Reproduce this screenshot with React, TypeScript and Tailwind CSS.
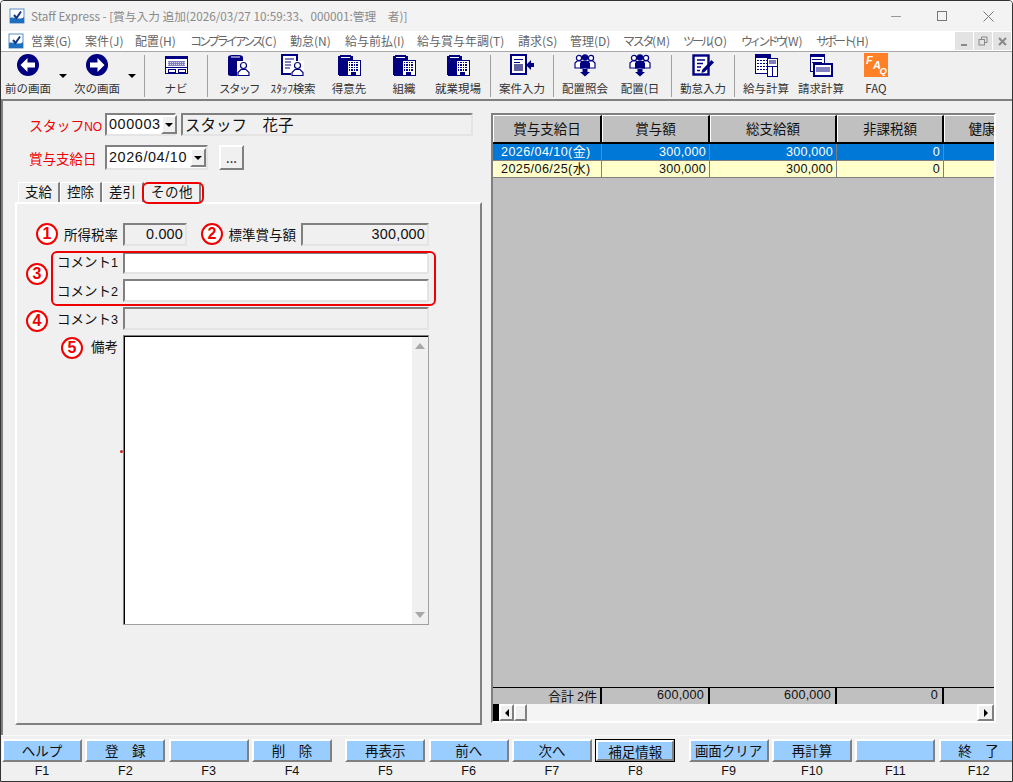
import { ReactNode } from "react";

const navy = "#000080";

function ArrowIcon({ dir }: { dir: "left" | "right" }) {
  return (
    <svg width="22" height="22" viewBox="0 0 22 22">
      <circle cx="11" cy="11" r="11" fill={navy} />
      {dir === "left" ? (
        <path d="M3.5 11 L10.5 4 V8.5 H18 V13.5 H10.5 V18 Z" fill="#fff" />
      ) : (
        <path d="M18.5 11 L11.5 4 V8.5 H4 V13.5 H11.5 V18 Z" fill="#fff" />
      )}
    </svg>
  );
}

function Cylinder() {
  return (
    <>
      <path d="M1 4 C1 1 3 1 8.5 1 C14 1 16 1 16 4 V20 C16 22 14 22 8.5 22 C3 22 1 22 1 20 Z" fill={navy} />
      <path d="M4 3 H13" stroke="#fff" strokeWidth="1" />
    </>
  );
}

function Person({ x = 0 }: { x?: number }) {
  return (
    <g transform={`translate(${x} 0)`}>
      <rect x="10" y="7" width="13" height="15" fill="#fff" />
      <circle cx="16.5" cy="11.5" r="3" fill="#fff" stroke={navy} strokeWidth="1.2" />
      <path d="M11 21.5 V18.5 L14 15.5 H19 L22 18.5 V21.5 Z" fill="#fff" stroke={navy} strokeWidth="1.2" />
    </g>
  );
}

function StaffIcon() {
  return (
    <svg width="24" height="23" viewBox="0 0 24 23">
      <Cylinder />
      <Person />
    </svg>
  );
}

function BuildingIcon() {
  return (
    <svg width="24" height="23" viewBox="0 0 24 23" shapeRendering="crispEdges">
      <Cylinder />
      <rect x="10" y="6" width="13" height="15" fill="#fff" stroke={navy} strokeWidth="1" />
      <path d="M12 8.5 H21 M12 11 H21 M12 13.5 H21 M12 16 H21" stroke={navy} strokeWidth="1.4" strokeDasharray="1.4 1" />
      <rect x="14" y="18" width="5" height="3" fill={navy} />
    </svg>
  );
}

function SearchDocIcon() {
  return (
    <svg width="24" height="23" viewBox="0 0 24 23">
      <rect x="1" y="1" width="15" height="19" fill="#fff" stroke={navy} strokeWidth="2" />
      <path d="M4 5 H13 M4 8 H13 M4 11 H13 M4 14 H9" stroke={navy} strokeWidth="1.2" />
      <Person x={0} />
    </svg>
  );
}

function NaviIcon() {
  return (
    <svg width="23" height="18" viewBox="0 0 23 18" shapeRendering="crispEdges">
      <rect x="0.5" y="0.5" width="22" height="17" fill="#fff" stroke={navy} />
      <rect x="1" y="1" width="21" height="2" fill={navy} />
      <rect x="3" y="4.5" width="17" height="5" fill="#8080c0" />
      <path d="M3 6 H20 M3 8 H20" stroke="#fff" strokeWidth="0.7" strokeDasharray="1 1" />
      <rect x="1" y="11" width="21" height="1" fill={navy} />
      <rect x="3" y="13" width="7" height="3" fill="#fff" stroke={navy} strokeWidth="1" />
      <rect x="13" y="13" width="7" height="3" fill="#fff" stroke={navy} strokeWidth="1" />
    </svg>
  );
}

function InputDocIcon() {
  return (
    <svg width="24" height="22" viewBox="0 0 24 22" shapeRendering="crispEdges">
      <rect x="1" y="1" width="15" height="19" fill="#fff" stroke={navy} strokeWidth="2" />
      <path d="M4 5 H13 M4 8 H10" stroke={navy} strokeWidth="1" />
      <rect x="4" y="10" width="9" height="7" fill="#6060a0" />
      <path d="M16 11 L21 6 V9 H24 V13 H21 V16 Z" fill={navy} shapeRendering="auto" />
    </svg>
  );
}

function PeopleIcon() {
  return (
    <svg width="22" height="23" viewBox="0 0 22 23">
      <circle cx="5" cy="4" r="2.6" fill="#fff" stroke={navy} strokeWidth="1.2" />
      <circle cx="17" cy="4" r="2.6" fill="#fff" stroke={navy} strokeWidth="1.2" />
      <path d="M1 14 V9 L3 7 H7 L9 9 V14 Z M13 14 V9 L15 7 H19 L21 9 V14 Z" fill="#fff" stroke={navy} strokeWidth="1.2" />
      <circle cx="11" cy="3.5" r="3.2" fill={navy} />
      <path d="M6 14.5 V9 L8 7 H14 L16 9 V14.5 Z" fill={navy} />
      <path d="M8.5 15 H13.5 V18 H16 L11 22.5 L6 18 H8.5 Z" fill={navy} />
    </svg>
  );
}

function PenDocIcon() {
  return (
    <svg width="23" height="22" viewBox="0 0 23 22">
      <rect x="1.5" y="1.5" width="15" height="19" fill="#fff" stroke={navy} strokeWidth="2.4" />
      <path d="M5 6 H13 M5 9.5 H11 M5 13 H9 M5 16.5 H8" stroke={navy} strokeWidth="1.6" />
      <path d="M10 16 L19.5 6 L22 8.5 L12.5 18 L9.5 19 Z" fill={navy} />
    </svg>
  );
}

function CalcIcon() {
  return (
    <svg width="23" height="23" viewBox="0 0 23 23" shapeRendering="crispEdges">
      <rect x="0.5" y="0.5" width="15" height="19" fill="#fff" stroke={navy} />
      <rect x="1" y="1" width="14" height="3" fill={navy} />
      <path d="M2 6.5 H14 M2 9.5 H14 M2 12.5 H14 M2 15.5 H14" stroke={navy} strokeWidth="1.6" strokeDasharray="2 1" />
      <rect x="12.5" y="4.5" width="10" height="18" fill="#fff" stroke={navy} />
      <rect x="14" y="6" width="7" height="4" fill="#8080c0" />
      <rect x="13" y="12" width="9" height="1" fill={navy} />
      <rect x="17" y="13" width="1" height="9" fill={navy} />
    </svg>
  );
}

function BillIcon() {
  return (
    <svg width="23" height="23" viewBox="0 0 23 23" shapeRendering="crispEdges">
      <rect x="0.5" y="0.5" width="14" height="17" fill="#fff" stroke={navy} />
      <rect x="1" y="1" width="13" height="2" fill={navy} />
      <path d="M2 5.5 H12 M2 8 H12" stroke={navy} />
      <rect x="3" y="9" width="20" height="14" fill={navy} />
      <rect x="5" y="11" width="16" height="10" fill="#fff" />
      <rect x="6" y="13" width="14" height="5" fill="#8080c0" />
    </svg>
  );
}

function FaqIcon() {
  return (
    <svg width="24" height="24" viewBox="0 0 24 24">
      <rect width="24" height="24" fill="#ff8026" />
      <g fill="#fff" fontFamily="Liberation Sans, sans-serif" fontWeight="700" fontStyle="italic">
        <text x="2" y="11" fontSize="11">F</text>
        <text x="9" y="16" fontSize="11">A</text>
        <text x="15.5" y="21" fontSize="9.5">Q</text>
      </g>
    </svg>
  );
}

function AppLogo() {
  return (
    <svg width="16" height="16" viewBox="0 0 16 16">
      <rect x="1" y="1" width="14" height="14" fill="#fff" stroke="#5a8fc0" />
      <path d="M1 10 C5 8 10 13 15 9 V15 H1 Z" fill="#1f6fc0" />
      <path d="M5 7 L7.5 10 L12 3.5" stroke="#123a80" strokeWidth="2" fill="none" />
    </svg>
  );
}

function DropArrow() {
  return <div className="w-0 h-0 border-x-[4px] border-x-transparent border-t-[4px] border-t-black" />;
}

function ToolItem({ label, icon, className }: { label: ReactNode; icon: ReactNode; className: string }) {
  return (
    <div className={`flex flex-col items-center shrink-0 ${className}`}>
      <div className="h-[26px] flex items-center justify-center">{icon}</div>
      <div className="mt-[2px] text-[11.5px] leading-[16px] text-[#333] whitespace-nowrap">{label}</div>
    </div>
  );
}

function ToolSep() {
  return <div className="w-px h-[42px] mt-[3px] bg-[#a0a0a0] shrink-0" />;
}

// kana in the menu is condensed in the app, so only that part gets tighter tracking
const menus = [
  { label: "営業", key: "(G)", w: "w-[54px]", kana: "" },
  { label: "案件", key: "(J)", w: "w-[50px]", kana: "" },
  { label: "配置", key: "(H)", w: "w-[55px]", kana: "" },
  { label: "コンプライアンス", key: "(C)", w: "w-[100px]", kana: "tracking-[-3px]" },
  { label: "勤怠", key: "(N)", w: "w-[55px]", kana: "" },
  { label: "給与前払", key: "(I)", w: "w-[72px]", kana: "" },
  { label: "給与賞与年調", key: "(T)", w: "w-[101px]", kana: "" },
  { label: "請求", key: "(S)", w: "w-[52px]", kana: "" },
  { label: "管理", key: "(D)", w: "w-[53px]", kana: "" },
  { label: "マスタ", key: "(M)", w: "w-[60px]", kana: "tracking-[-2.3px]" },
  { label: "ツール", key: "(O)", w: "w-[58px]", kana: "tracking-[-3px]" },
  { label: "ウィンドウ", key: "(W)", w: "w-[75px]", kana: "tracking-[-3.4px]" },
  { label: "サポート", key: "(H)", w: "w-[60px]", kana: "tracking-[-3px]" },
];

const fkeys = [
  { label: "ヘルプ", key: "F1" },
  { label: "登　録", key: "F2" },
  { label: "", key: "F3" },
  { label: "削　除", key: "F4" },
  { label: "再表示", key: "F5", gap: true },
  { label: "前へ", key: "F6" },
  { label: "次へ", key: "F7" },
  { label: "補足情報", key: "F8", focus: true },
  { label: "画面クリア", key: "F9", gap: true },
  { label: "再計算", key: "F10" },
  { label: "", key: "F11" },
  { label: "終　了", key: "F12" },
];

const num = "font-['Liberation_Sans','Noto_Sans_CJK_JP',sans-serif]";
const sunken = "border-2 border-t-[#808080] border-l-[#808080] border-r-[#e4e4e4] border-b-[#e4e4e4]";
const raised = "border-2 border-t-white border-l-white border-r-[#808080] border-b-[#808080]";
const colWidths = ["w-[109px]", "w-[108px]", "w-[127px]", "w-[107px]", "w-[75px]"];

function Combo({ value, className }: { value: string; className: string }) {
  return (
    <div className={`flex items-center bg-white ${sunken} ${className}`}>
      <span className={`flex-1 pl-[2px] text-[14.4px] tracking-[0.6px] text-[#111] whitespace-nowrap ${num}`}>{value}</span>
      <div className={`w-[16px] h-[19px] shrink-0 flex items-center justify-center bg-[#f0f0f0] ${raised}`}>
        <DropArrow />
      </div>
    </div>
  );
}

function Badge({ n, className }: { n: number; className: string }) {
  return (
    <div
      className={`absolute w-[22px] h-[22px] rounded-full bg-white border-[2.5px] border-[#f00000] text-[#f00000] flex items-center justify-center text-[16px] leading-none font-bold font-['Liberation_Sans',sans-serif] ${className}`}
    >
      {n}
    </div>
  );
}

function Label({ children, className = "w-[101px] leading-[23px]" }: { children: ReactNode; className?: string }) {
  return <div className={`text-right text-[13.5px] text-[#111] whitespace-nowrap shrink-0 ${className}`}>{children}</div>;
}

function GridRow({ first, values, className }: { first: ReactNode; values: string[]; className: string }) {
  return (
    <div className={`flex h-[17px] border-b border-[#808080] ${className}`}>
      <div className={`${colWidths[0]} shrink-0 border-r border-[#808080] pl-[8px] text-[12.6px] tracking-[0.4px] leading-[16px] whitespace-nowrap ${num}`}>{first}</div>
      {values.map((v, i) => (
        <div key={i} className={`${colWidths[i + 1]} shrink-0 border-r border-[#808080] pr-[3px] text-right text-[12.6px] tracking-[0.2px] leading-[16px] ${num}`}>
          {v}
        </div>
      ))}
    </div>
  );
}

export default function App() {
  return (
    <div className="relative w-[1013px] h-[782px] overflow-hidden flex flex-col bg-[#f0f0f0] border border-[#333] rounded-t-[4px] font-['Noto_Sans_CJK_JP',sans-serif]">
      {/* title bar */}
      <div className="h-[30px] flex items-center bg-[#f3f3f3] shrink-0">
        <div className="ml-[8px] mr-[6px]">
          <AppLogo />
        </div>
        <span className="text-[11.7px] text-[#8a8a8a] whitespace-nowrap">Staff Express - [賞与入力 追加(2026/03/27 10:59:33、000001:管理　者)]</span>
        <div className="ml-auto flex items-center">
          <div className="w-[46px] flex justify-center">
            <div className="w-[10px] h-px bg-[#999]" />
          </div>
          <div className="w-[46px] flex justify-center">
            <div className="w-[10px] h-[10px] border border-[#777]" />
          </div>
          <div className="w-[46px] flex justify-center mr-[1px]">
            <svg width="11" height="11" viewBox="0 0 11 11">
              <path d="M0.5 0.5 L10.5 10.5 M10.5 0.5 L0.5 10.5" stroke="#777" />
            </svg>
          </div>
        </div>
      </div>

      {/* menu bar */}
      <div className="h-[20px] flex items-center bg-white shrink-0">
        <div className="ml-[7px] mr-[7px]">
          <AppLogo />
        </div>
        {menus.map((m) => (
          <div key={m.label} className={`${m.w} text-[12px] leading-[20px] text-[#666] whitespace-nowrap shrink-0`}>
            <span className={m.kana}>{m.label}</span>
            {m.key}
          </div>
        ))}
        <div className="ml-auto flex gap-[1px] mr-[1px] text-[#777]">
          <div className="w-[18px] h-[18px] bg-[#e3e3e3] flex items-end justify-center pb-[4px]">
            <div className="w-[6px] h-[2px] bg-[#888]" />
          </div>
          <div className="w-[18px] h-[18px] bg-[#e3e3e3] flex items-center justify-center">
            <svg width="10" height="10" viewBox="0 0 10 10" fill="none" stroke="#888">
              <rect x="1" y="3.5" width="5.5" height="5.5" />
              <path d="M3.5 3 V1 H9 V6.5 H7" />
            </svg>
          </div>
          <div className="w-[18px] h-[18px] bg-[#e3e3e3] flex items-center justify-center">
            <svg width="9" height="9" viewBox="0 0 9 9">
              <path d="M1 1 L8 8 M8 1 L1 8" stroke="#888" strokeWidth="2" />
            </svg>
          </div>
        </div>
      </div>
      <div className="h-px bg-[#a8a8a8] shrink-0" />

      {/* toolbar */}
      <div className="h-[47px] flex shrink-0">
        <ToolItem className="w-[54px]" label="前の画面" icon={<ArrowIcon dir="left" />} />
        <div className="w-[15px] shrink-0 flex justify-center pt-[22px]">
          <DropArrow />
        </div>
        <ToolItem className="w-[54px]" label="次の画面" icon={<ArrowIcon dir="right" />} />
        <div className="w-[20px] shrink-0 flex justify-center pt-[22px] pr-[4px]">
          <DropArrow />
        </div>
        <ToolSep />
        <ToolItem className="w-[62px]" label="ナビ" icon={<NaviIcon />} />
        <ToolSep />
        <ToolItem className="w-[62px]" label={<span className="tracking-[-1.5px]">スタッフ</span>} icon={<StaffIcon />} />
        <ToolItem className="w-[46px]" label={<span className="text-[11.5px] tracking-[-0.2px]">ｽﾀｯﾌ検索</span>} icon={<SearchDocIcon />} />
        <ToolItem className="w-[66px]" label="得意先" icon={<BuildingIcon />} />
        <ToolItem className="w-[44px]" label="組織" icon={<BuildingIcon />} />
        <ToolItem className="w-[64px]" label="就業現場" icon={<BuildingIcon />} />
        <ToolSep />
        <ToolItem className="w-[62px]" label="案件入力" icon={<InputDocIcon />} />
        <ToolSep />
        <ToolItem className="w-[62px]" label="配置照会" icon={<PeopleIcon />} />
        <ToolItem className="w-[48px]" label="配置(日" icon={<PeopleIcon />} />
        <div className="w-[7px] shrink-0" />
        <ToolSep />
        <ToolItem className="w-[62px]" label="勤怠入力" icon={<PenDocIcon />} />
        <ToolSep />
        <ToolItem className="w-[62px]" label="給与計算" icon={<CalcIcon />} />
        <ToolItem className="w-[48px]" label="請求計算" icon={<BillIcon />} />
        <ToolItem className="w-[62px]" label="FAQ" icon={<FaqIcon />} />
      </div>

      {/* main area */}
      <div className="flex-1 flex min-h-0 border-t-2 border-l-2 border-[#808080] border-b-0">
        {/* left column */}
        <div className="relative w-[488px] shrink-0">
          <div className="flex mt-[12px] ml-[26px] h-[23px]">
            <div className="w-[76px] text-[14px] leading-[25px] text-[#f00000] whitespace-nowrap tracking-[-0.2px]">
              スタッフ<span className={`text-[12px] ${num}`}>NO</span>
            </div>
            <Combo value="000003" className="w-[71px] h-[23px]" />
            <div className={`ml-[5px] w-[292px] h-[23px] text-[15.5px] leading-[19px] pl-[2px] text-[#111] ${sunken}`}>スタッフ　花子</div>
          </div>
          <div className="flex mt-[9px] ml-[26px] h-[25px]">
            <div className="w-[76px] text-[13.5px] leading-[27px] text-[#f00000] whitespace-nowrap">賞与支給日</div>
            <Combo value="2026/04/10" className="w-[103px] h-[25px]" />
            <div className={`ml-[11px] w-[25px] h-[25px] bg-[#f0f0f0] text-center text-[13px] leading-[21px] text-black ${raised}`}>...</div>
          </div>

          {/* tabs */}
          <div className="flex mt-[12px] ml-[15px] h-[20px]">
            {["支給", "控除", "差引"].map((t) => (
              <div key={t} className="w-[42px] border-t border-l border-white border-r-2 border-r-[#808080] text-center text-[13.5px] leading-[17px] text-[#111]">
                {t}
              </div>
            ))}
            <div className="w-[57px] border-t border-l border-white border-r-2 border-r-[#808080] text-center text-[13.5px] leading-[17px] tracking-[0.5px] text-[#111]">
              その他
            </div>
          </div>

          {/* tab panel */}
          <div className="relative ml-[12px] w-[467px] h-[523px] border-2 border-t-white border-l-white border-r-[#808080] border-b-[#808080]">
            <div className="flex mt-[19px] h-[23px]">
              <Label>所得税率</Label>
              <div className={`ml-[5px] w-[64px] h-[23px] pr-[2px] text-right text-[14.4px] tracking-[0.2px] leading-[19px] text-[#111] ${num} ${sunken}`}>0.000</div>
              <Label className="ml-[40px] w-[69px] leading-[23px]">標準賞与額</Label>
              <div className={`ml-[5px] w-[128px] h-[23px] pr-[2px] text-right text-[14.4px] tracking-[0.2px] leading-[19px] text-[#111] ${num} ${sunken}`}>300,000</div>
            </div>
            <div className="flex mt-[6px] h-[22px]">
              <Label className="w-[101px] leading-[19px]">
                コメント<span className={`text-[12.6px] ${num}`}>1</span>
              </Label>
              <div className={`ml-[5px] w-[306px] h-[22px] bg-white ${sunken}`} />
            </div>
            <div className="flex mt-[5px] h-[23px]">
              <Label>
                コメント<span className={`text-[12.6px] ${num}`}>2</span>
              </Label>
              <div className={`ml-[5px] w-[306px] h-[23px] bg-white ${sunken}`} />
            </div>
            <div className="flex mt-[5px] h-[23px]">
              <Label>
                コメント<span className={`text-[12.6px] ${num}`}>3</span>
              </Label>
              <div className={`ml-[5px] w-[306px] h-[23px] ${sunken}`} />
            </div>
            <div className="flex mt-[5px] h-[290px]">
              <Label>備考</Label>
              <div className="ml-[5px] w-[306px] h-[290px] border border-t-[#808080] border-l-[#808080] border-r-[#a0a0a0] border-b-[#a0a0a0]">
                <div className="h-full bg-white flex justify-end border-t border-l border-black">
                  <div className="w-[16px] bg-[#f0f0f0] flex flex-col items-center justify-between py-[6px]">
                    <div className="w-0 h-0 border-x-[5px] border-x-transparent border-b-[6px] border-b-[#a8a8a8]" />
                    <div className="w-0 h-0 border-x-[5px] border-x-transparent border-t-[6px] border-t-[#a8a8a8]" />
                  </div>
                </div>
              </div>
            </div>

            {/* annotations */}
            <Badge n={1} className="left-[19px] top-[19px]" />
            <Badge n={2} className="left-[184px] top-[19px]" />
            <Badge n={3} className="left-[9px] top-[59px]" />
            <Badge n={4} className="left-[9px] top-[106px]" />
            <Badge n={5} className="left-[44px] top-[133px]" />
            <div className="absolute left-[34px] top-[47px] w-[385px] h-[55px] border-[2.5px] border-[#f00000] rounded-[6px]" />
            <div className="absolute left-[103px] top-[246px] w-[3px] h-[3px] rounded-full bg-[#d02020]" />
          </div>

          <div className="absolute left-[139px] top-[81px] w-[62px] h-[22px] border-[2.5px] border-[#f00000] rounded-[6px]" />
        </div>

        {/* right grid */}
        <div className="mt-[12px] w-[505px] h-[610px] flex flex-col border-2 border-t-[#808080] border-l-[#808080] border-r-white border-b-white bg-[#c0c0c0] overflow-hidden">
          <div className="flex h-[29px] border-b-2 border-black shrink-0">
            {["賞与支給日", "賞与額", "総支給額", "非課税額", "健康"].map((h, i) => (
              <div
                key={h}
                className={`${colWidths[i]} shrink-0 ${i < 4 ? "border-r-2 border-r-black" : ""} border-t border-l border-white text-center text-[13.5px] leading-[25px] text-[#111] whitespace-nowrap`}
              >
                {h}
              </div>
            ))}
          </div>
          <GridRow
            className="bg-[#0078d7] text-white"
            first={
              <>
                2026/04/10(<span className="text-[13px]">金</span>)
              </>
            }
            values={["300,000", "300,000", "0"]}
          />
          <GridRow
            className="bg-[#ffffcc] text-[#111]"
            first={
              <>
                2025/06/25(<span className="text-[13px]">水</span>)
              </>
            }
            values={["300,000", "300,000", "0"]}
          />
          <div className="flex-1" />
          <div className="flex h-[17px] border-t border-black shrink-0 text-[#111]">
            <div className={`${colWidths[0]} shrink-0 border-r-2 border-black pr-[3px] text-right text-[13px] leading-[15px] whitespace-nowrap`}>
              合計 <span className={`text-[12.6px] ${num}`}>2</span>件
            </div>
            {["600,000", "600,000", "0"].map((v, i) => (
              <div key={i} className={`${colWidths[i + 1]} shrink-0 border-r-2 border-black pr-[4px] text-right text-[12.6px] tracking-[0.2px] leading-[15px] ${num}`}>
                {v}
              </div>
            ))}
          </div>
          <div className="flex h-[17px] shrink-0 bg-[#f4f4f4]">
            <div className="w-[6px] bg-black shrink-0" />
            <div className={`w-[15px] bg-[#f0f0f0] flex items-center justify-center shrink-0 ${raised}`}>
              <div className="w-0 h-0 border-y-[4px] border-y-transparent border-r-[4px] border-r-black" />
            </div>
            <div className={`w-[13px] bg-[#f0f0f0] shrink-0 ${raised}`} />
            <div className="flex-1" />
            <div className={`w-[17px] bg-[#f0f0f0] flex items-center justify-center shrink-0 ${raised}`}>
              <div className="w-0 h-0 border-y-[4px] border-y-transparent border-l-[4px] border-l-black" />
            </div>
          </div>
        </div>
      </div>

      {/* function keys */}
      <div className="h-[46px] shrink-0 border-t border-[#fafafa] pt-[3px] flex gap-[3.33px] pl-[1px]">
        {fkeys.map((k) => (
          <div key={k.key} className={`w-[80px] shrink-0 flex flex-col items-center ${k.gap ? "ml-[10px]" : ""}`}>
            <div className={`w-[80px] h-[23px] bg-[#99ccff] text-center whitespace-nowrap text-[13.5px] text-[#111] leading-[18px] ${k.focus ? "border border-black" : raised}`}>
              {k.focus ? <div className={`h-full ${raised}`}>{k.label}</div> : k.label}
            </div>
            <div className={`mt-[1px] text-[12.6px] leading-[17px] text-[#111] ${num}`}>{k.key}</div>
          </div>
        ))}
      </div>
    </div>
  );
}
